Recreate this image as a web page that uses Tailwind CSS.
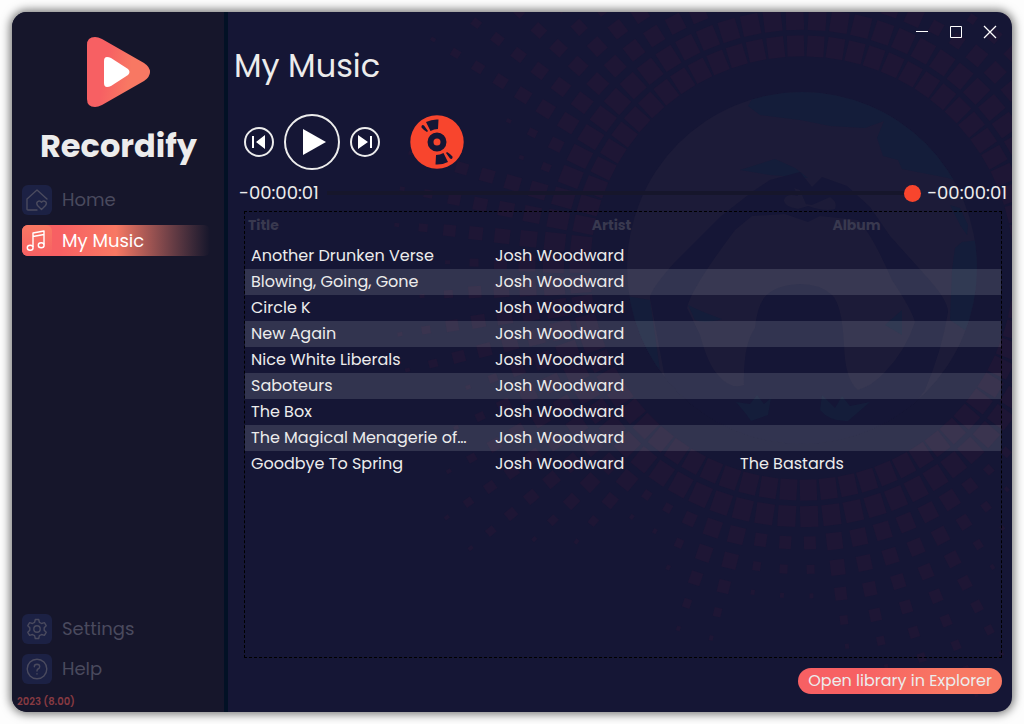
<!DOCTYPE html>
<html lang="en">
<head>
    <meta charset="UTF-8">
    <meta name="viewport" content="width=device-width, initial-scale=1.0">
    <title>Recordify</title>
    <script src="https://cdn.jsdelivr.net/npm/@tailwindcss/browser@4"></script>
</head>
<body class="bg-[#fdfdfd] font-[Poppins,Inter,sans-serif] text-[#ececec]">
    <div class="min-h-screen p-3 flex">
        <div class="relative flex flex-1 overflow-hidden rounded-[15px] bg-[#151635] shadow-[0_0_10px_2px_rgba(0,0,0,0.55)]">

            <!-- Background art -->
            <svg class="absolute inset-0 w-full h-full" viewBox="12 12 1000 700" preserveAspectRatio="xMidYMid slice" aria-hidden="true">
                <g id="rings" fill="#1e1635"></g>
                <clipPath id="disc"><ellipse cx="802" cy="268" rx="175" ry="176"/></clipPath>
                <g clip-path="url(#disc)">
                    <rect x="620" y="90" width="370" height="360" fill="#1c1b38"/>
                    <path fill="#141d3a" d="M748 106L756 92H870L960 150L980 190L948 178L902 169L898 160L883 156L877 138L884 121L865 128L830 126L800 120L760 115ZM740 170L775 159L795 168L808 178L770 175ZM950 205L960 208L968 225L967 235L960 225ZM955 248L962 242L980 240V340L950 320L952 270ZM620 295L650 300L660 370L630 340Z"/>
                    <path fill="#151636" d="M620 450L665 378Q658 340 650 298Q650 290 675 262L720 217L752 192L770 180L800 172L812 187L822 177L847 186L870 207L890 236L925 275Q948 300 948 312Q942 350 925 390L880 450Z"/>
                    <path fill="#1c1b38" d="M687 308Q690 290 735 230L752 216L785 214L808 222L820 216L858 220Q872 234 892 280Q912 310 915 322Q906 350 885 372Q872 386 858 390Q845 380 844 345Q842 305 832 295Q820 284 800 284Q774 285 764 298Q757 308 755 328Q743 345 744 385Q730 390 718 375Q708 365 700 335ZM784 200Q786 193 798 196L794 188L800 190L806 204L812 205L830 197Q838 202 835 209Q825 212 808 206L798 209Q783 206 784 200Z"/>
                    <path fill="#141d3a" d="M688 305Q702 312 722 319Q705 324 695 320ZM885 325L902 310V335ZM736 402L746 414L751 421L768 415L771 398L764 404L757 395L750 404ZM822 395L820 410Q830 422 848 421L870 402L850 406L842 396L835 408Z"/>
                </g>
            </svg>

            <!-- Sidebar -->
            <aside class="relative w-54 shrink-0 flex flex-col bg-[#16162b] border-r-4 border-[#021125]">
                <svg class="w-16 h-18 mt-6 ml-[74px]" viewBox="0 0 64 72" aria-hidden="true">
                    <defs>
                        <linearGradient id="play" x1="0" y1="0.3" x2="1" y2="0.5">
                            <stop offset="0.3" stop-color="#f76063"/>
                            <stop offset="0.7" stop-color="#f87863"/>
                        </linearGradient>
                    </defs>
                    <path fill="url(#play)" d="M1 9Q1 1 9 1Q12 1 16 3L58 27Q64 31 64 36Q64 41 58 45L16 69Q12 71 9 71Q1 71 1 63Z"/>
                    <path fill="#fff" d="M18 25Q18 21 21 21Q23 21 25 22L42 33Q45 36 42 39L25 50Q23 51 21 51Q18 51 18 47Z"/>
                </svg>
                <div class="mt-[14px] pl-7 text-[32px] leading-12 font-bold">Recordify</div>
                <nav class="flex-1 flex flex-col gap-[10px] mt-[15px] pl-[10px] pr-[14px] text-[18px] leading-[30px] text-[#4a4a5e]">
                    <a href="#" class="flex items-center gap-[10px]">
                        <span class="size-[30px] rounded-md bg-[#1c2144] flex items-center justify-center">
                            <svg class="size-6" viewBox="0 0 24 24" fill="none" stroke="currentColor" stroke-width="1.4" stroke-linecap="round" stroke-linejoin="round"><path d="M12 22H3Q2 22 2 21V11L12 2L22 11M16.500 21.500L12.500 17.500Q11 15.500 12.500 13.800Q14.700 12 16.500 14.200Q18.300 12 20.700 13.800Q22.200 15.500 20.500 17.500Z"/></svg>
                        </span>
                        Home
                    </a>
                    <a href="#" aria-current="page" class="flex items-center gap-[10px] rounded-md text-white bg-linear-to-r from-[#f76063] from-20% via-[#f87863] via-50% to-[#16162b]">
                        <span class="w-[30px] h-[31px] rounded-md bg-linear-to-b from-[#f87863] to-[#f76063] flex items-center justify-center">
                            <svg class="size-6" viewBox="0 0 24 24" fill="none" stroke="currentColor" stroke-width="1.4" stroke-linejoin="round"><path d="M8 18V4L19 2V15.500M8 7.500L19 5.500"/><ellipse cx="5.200" cy="18.800" rx="2.900" ry="2.500"/><ellipse cx="16.200" cy="16.300" rx="2.900" ry="2.500"/></svg>
                        </span>
                        My Music
                    </a>
                    <a href="#" class="flex items-center gap-[10px] mt-auto">
                        <span class="size-[30px] rounded-md bg-[#1c2144] flex items-center justify-center">
                            <svg class="size-6" viewBox="0 0 24 24" fill="none" stroke="currentColor" stroke-width="1.4" stroke-linejoin="round"><circle cx="12" cy="12" r="3.200"/><path d="M10.300 2.500H13.700L14.400 5.300L16.600 6.500L19.400 5.700L21.200 8.700L19.200 10.700V13.300L21.200 15.300L19.400 18.300L16.600 17.500L14.400 18.700L13.700 21.500H10.300L9.600 18.700L7.400 17.500L4.600 18.300L2.800 15.300L4.800 13.300V10.700L2.800 8.700L4.600 5.700L7.400 6.500L9.600 5.300Z"/></svg>
                        </span>
                        Settings
                    </a>
                    <a href="#" class="flex items-center gap-[10px]">
                        <span class="size-[30px] rounded-md bg-[#1c2144] flex items-center justify-center">
                            <svg class="size-6" viewBox="0 0 24 24" fill="none" stroke="currentColor" stroke-width="1.4" stroke-linecap="round"><circle cx="12" cy="12" r="9.800"/><path d="M9.300 9.800Q9.300 7.200 12 7.200Q14.700 7.300 14.700 9.700Q14.600 11.200 13 12Q12 12.500 12 14M12 16.800V17"/></svg>
                        </span>
                        Help
                    </a>
                </nav>
                <p class="mt-[10px] mb-[2px] pl-[5px] text-[10px] leading-4 font-semibold text-[#873a42]">2023 (8.00)</p>
            </aside>

            <!-- Main -->
            <main class="relative flex-1 min-w-0 flex flex-col pl-4 pr-[10px]">
                <header class="flex justify-between items-start -ml-[10px]">
                    <h1 class="mt-[30px] text-[32px] leading-12">My Music</h1>
                    <div class="flex mt-1 -mr-[5px] text-white">
                        <button type="button" aria-label="Minimize" class="w-[34px] h-8 flex items-center justify-center">
                            <svg class="size-4" viewBox="0 0 16 16" stroke="currentColor"><path d="M2 7.500H14"/></svg>
                        </button>
                        <button type="button" aria-label="Maximize" class="w-[34px] h-8 flex items-center justify-center">
                            <svg class="size-4" viewBox="0 0 16 16" fill="none" stroke="currentColor"><path d="M2.500 2.500H13.500V13.500H2.500Z"/></svg>
                        </button>
                        <button type="button" aria-label="Close" class="w-[34px] h-8 flex items-center justify-center">
                            <svg class="size-4" viewBox="0 0 16 16" stroke="currentColor" stroke-width="1.3"><path d="M2 2L14 14M14 2L2 14"/></svg>
                        </button>
                    </div>
                </header>

                <div class="flex items-center gap-[10px] mt-6">
                    <button type="button" aria-label="Previous" class="size-[30px] rounded-full border-2 border-[#ececec] flex items-center justify-center">
                        <svg class="size-4" viewBox="0 0 16 16" fill="#fff"><path d="M1 2H3V14H1ZM14 1V15L5 8Z"/></svg>
                    </button>
                    <button type="button" aria-label="Play" class="size-14 rounded-full border-2 border-[#ececec] flex items-center justify-center">
                        <svg class="w-6 h-7 ml-1" viewBox="0 0 24 28" fill="#fff"><path d="M1 1L24 14L1 27Z"/></svg>
                    </button>
                    <button type="button" aria-label="Next" class="size-[30px] rounded-full border-2 border-[#ececec] flex items-center justify-center">
                        <svg class="size-4" viewBox="0 0 16 16" fill="#fff"><path d="M13 2H15V14H13ZM1 1V15L11 8Z"/></svg>
                    </button>
                    <button type="button" aria-label="Record" class="ml-5">
                        <svg class="size-[54px]" viewBox="0 0 54 54">
                            <circle cx="27" cy="27" r="26.700" fill="#f8452d"/>
                            <circle cx="27" cy="27" r="6.500" fill="none" stroke="#151635" stroke-width="6"/>
                            <g fill="#151635"><path d="M16 7Q22 4 28.500 4.500L28 14Q24 14 20.500 16ZM11.500 11Q12.500 9.500 14 10.500L18 16L17 17Q13.500 15 11.500 12.500Z"/><path transform="rotate(180 27 27)" d="M16 7Q22 4 28.500 4.500L28 14Q24 14 20.500 16ZM11.500 11Q12.500 9.500 14 10.500L18 16L17 17Q13.500 15 11.500 12.500Z"/></g>
                        </svg>
                    </button>
                </div>

                <div class="flex items-center mt-[10px] -ml-[5px] -mr-[5px] text-[18px] leading-[26px]">
                    <span>-00:00:01</span>
                    <input type="range" min="0" max="100" value="100" aria-label="Position" class="flex-1 min-w-0 h-5 ml-2 mr-[6px] appearance-none bg-transparent [&::-webkit-slider-runnable-track]:h-1 [&::-webkit-slider-runnable-track]:bg-[#16162b] [&::-webkit-slider-thumb]:appearance-none [&::-webkit-slider-thumb]:size-[17px] [&::-webkit-slider-thumb]:-mt-[6px] [&::-webkit-slider-thumb]:rounded-full [&::-webkit-slider-thumb]:bg-[#f8452d]">
                    <span>-00:00:01</span>
                </div>

                <section class="flex-1 mt-[5px] border border-dashed border-black">
                    <table class="w-full table-fixed text-[16px] leading-[26px] [&_td]:p-0 [&_td]:pl-[6px] [&_td]:truncate [&_td]:pr-4">
                        <colgroup><col class="w-[244px]"><col class="w-[245px]"><col class="w-[245px]"><col></colgroup>
                        <thead>
                            <tr class="h-[31px] align-top text-[14px] font-bold text-[#39394f]">
                                <th class="p-0 pl-[3px] text-left">Title</th>
                                <th class="p-0">Artist</th>
                                <th class="p-0">Album</th>
                                <th class="p-0"></th>
                            </tr>
                        </thead>
                        <tbody class="[&_tr:nth-child(even)]:bg-[#cfd4dc]/16">
                            <tr><td>Another Drunken Verse</td><td>Josh Woodward</td><td></td><td></td></tr>
                            <tr><td>Blowing, Going, Gone</td><td>Josh Woodward</td><td></td><td></td></tr>
                            <tr><td>Circle K</td><td>Josh Woodward</td><td></td><td></td></tr>
                            <tr><td>New Again</td><td>Josh Woodward</td><td></td><td></td></tr>
                            <tr><td>Nice White Liberals</td><td>Josh Woodward</td><td></td><td></td></tr>
                            <tr><td>Saboteurs</td><td>Josh Woodward</td><td></td><td></td></tr>
                            <tr><td>The Box</td><td>Josh Woodward</td><td></td><td></td></tr>
                            <tr><td>The Magical Menagerie of…</td><td>Josh Woodward</td><td></td><td></td></tr>
                            <tr><td>Goodbye To Spring</td><td>Josh Woodward</td><td>The Bastards</td><td></td></tr>
                        </tbody>
                    </table>
                </section>

                <footer class="flex justify-end pt-[10px] pb-[18px]">
                    <button type="button" class="h-[26px] px-[10px] rounded-full bg-linear-to-r from-[#f76063] from-30% to-[#f87863] to-75% text-[16px] leading-[26px] whitespace-nowrap">Open library in Explorer</button>
                </footer>
            </main>
        </div>
    </div>
    <script>
        // Rings of squares round the disc. Each spoke has its own length,
        // and the squares shrink towards its tip.
        var reach = [4, 4, 6, 6, 4, 3, 3, 5, 6, 8, 8, 7, 6, 5, 7, 7, 6, 5, 7, 7, 7, 3, 4, 8, 8,
                     7, 6, 6, 6, 5, 5, 4, 5, 6, 5, 4, 4, 5, 6, 5, 4, 4, 5, 6, 5, 4, 4, 5, 6, 6,
                     5, 5, 6, 6, 7, 6, 5, 3, 3, 4, 3, 3, 4, 5, 8, 9, 8, 7, 6, 4];
        var rings = '';
        reach.forEach(function (last, i) {
            var deg = i * 360 / reach.length + 3.5;
            for (var k = 0; k <= last; k++) {
                var side = k < 2 ? 17 + k : Math.min(19 - 1.5 * k, 4 + 4 * (last - k));
                var length = k < 2 ? 21 : side + 1;
                var y = 268 + 222 + 26.5 * k;
                rings += '<rect x="' + (802 - side / 2) + '" y="' + (y - length / 2) + '" width="' + side +
                    '" height="' + length + '" transform="rotate(' + deg + ' 802 268)"/>';
            }
        });
        document.getElementById('rings').innerHTML = rings;
    </script>
</body>
</html>
